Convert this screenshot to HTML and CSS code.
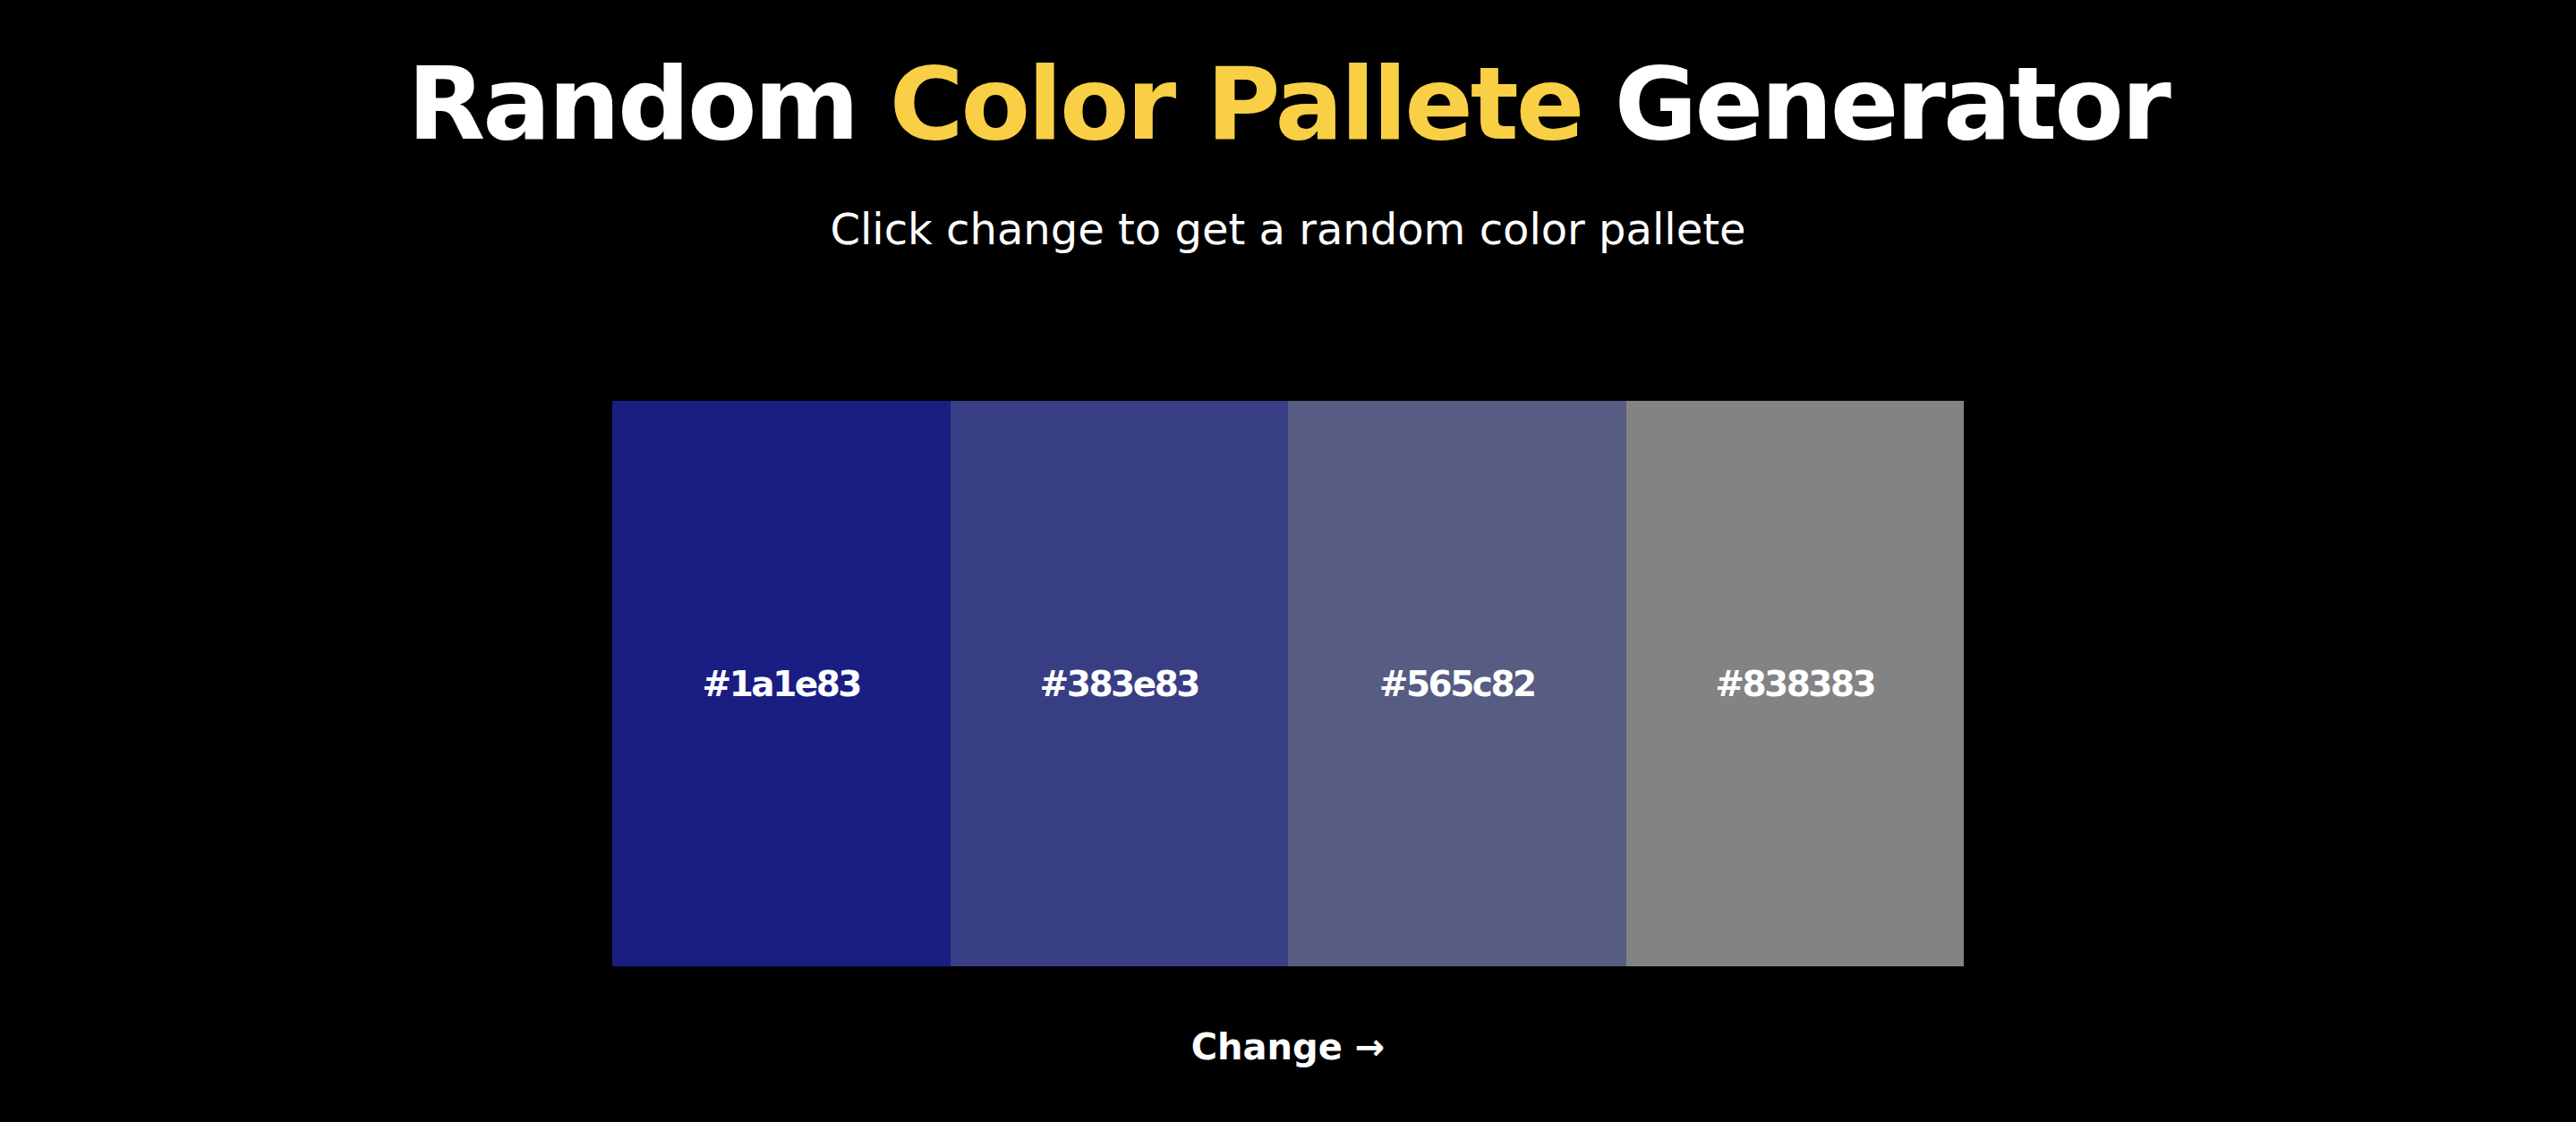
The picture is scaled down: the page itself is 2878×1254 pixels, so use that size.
FILE: index.html
```html
<!DOCTYPE html>
<html>
<head>
<meta charset="utf-8">
<link rel="stylesheet" href="styles.css">
</head>
<body>
<main class="page">
  <h1 class="title">Random <span class="accent">Color Pallete</span> Generator</h1>
  <p class="subtitle">Click change to get a random color pallete</p>
  <div class="palette">
    <div class="swatch" style="background:#1a1e83"><span class="hex">#1a1e83</span></div>
    <div class="swatch" style="background:#383e83"><span class="hex">#383e83</span></div>
    <div class="swatch" style="background:#565c82"><span class="hex">#565c82</span></div>
    <div class="swatch" style="background:#838383"><span class="hex">#838383</span></div>
  </div>
  <button class="change">Change →</button>
</main>
</body>
</html>
```

FILE: styles.css
```css
html, body {
  margin: 0;
  padding: 0;
  background: #000;
}
.page {
  display: flex;
  flex-direction: column;
  align-items: center;
  font-family: "DejaVu Sans", "Open Sans", sans-serif;
  color: #fff;
  height: 1254px;
  overflow: hidden;
}
.title {
  margin: 46px 0 0 0;
  font-size: 113px;
  line-height: 140px;
  font-weight: 700;
  letter-spacing: -3px;
  white-space: nowrap;
}
.accent {
  color: #f9cf45;
}
.subtitle {
  margin: 40px 0 0 0;
  font-size: 48px;
  line-height: 60px;
  font-weight: 400;
}
.palette {
  margin-top: 162px;
  display: flex;
  width: 1510px;
  height: 632px;
}
.swatch {
  flex: 1;
  display: flex;
  align-items: center;
  justify-content: center;
}
.hex {
  font-size: 39px;
  font-weight: 700;
  letter-spacing: -2.5px;
}
.change {
  margin-top: 60px;
  background: none;
  border: none;
  color: #fff;
  font-family: inherit;
  font-size: 40px;
  font-weight: 700;
  line-height: 60px;
  padding: 0;
}
```
